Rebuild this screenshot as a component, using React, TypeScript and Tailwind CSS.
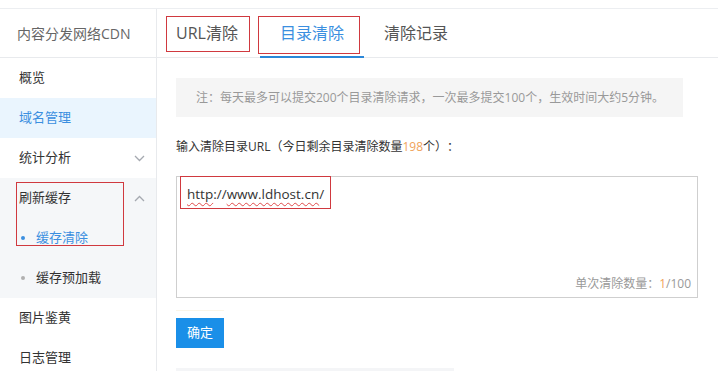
import React from "react";

const font = { fontFamily: '"Open Sans", "Noto Sans CJK SC", sans-serif' };

function Chevron({ up }: { up?: boolean }) {
  return (
    <svg width="11" height="7" viewBox="0 0 11 7" className="mr-[11px]">
      <path
        d={up ? "M1 6 L5.5 1.5 L10 6" : "M1 1 L5.5 5.5 L10 1"}
        fill="none"
        stroke="#a5a9b0"
        strokeWidth="1.3"
      />
    </svg>
  );
}

export default function App() {
  return (
    <div
      className="relative w-[718px] h-[371px] overflow-hidden bg-white text-[#333] [text-spacing-trim:space-all]"
      style={font}
    >
      <div className="h-[8px]" />
      <div className="flex h-[363px] border-t border-[#eceef1]">
        {/* Sidebar */}
        <aside className="w-[157px] shrink-0 border-r border-[#e8eaed] flex flex-col overflow-hidden">
          <div className="h-[49px] shrink-0 border-b border-[#e8eaed] flex items-center pl-[17px] text-[14px] text-[#666]">
            内容分发网络CDN
          </div>
          <div className="h-[40px] shrink-0 flex items-center pl-[19px] text-[13px] text-[#333]">概览</div>
          <div className="h-[40px] shrink-0 flex items-center pl-[19px] text-[13px] text-[#3b8fe0] bg-[#eaf5fe]">
            域名管理
          </div>
          <div className="h-[40px] shrink-0 flex items-center justify-between pl-[19px] text-[13px] text-[#333]">
            <span>统计分析</span>
            <Chevron />
          </div>
          <div className="shrink-0 bg-[#f5f7f9]">
            <div className="h-[40px] flex items-center justify-between pl-[19px] text-[13px] text-[#333]">
              <span>刷新缓存</span>
              <Chevron up />
            </div>
            <div className="h-[40px] flex items-center pl-[21px] text-[13px] text-[#3b8fe0]">
              <span className="w-[4px] h-[4px] rounded-full bg-[#3b8fe0] mr-[11px]" />
              缓存清除
            </div>
            <div className="h-[40px] flex items-center pl-[21px] text-[13px] text-[#333]">
              <span className="w-[4px] h-[4px] rounded-full bg-[#b0b0b0] mr-[11px]" />
              缓存预加载
            </div>
          </div>
          <div className="h-[40px] shrink-0 flex items-center pl-[19px] text-[13px] text-[#333]">图片鉴黄</div>
          <div className="h-[40px] shrink-0 flex items-center pl-[19px] text-[13px] text-[#333]">日志管理</div>
        </aside>

        {/* Main */}
        <main className="flex-1 flex flex-col">
          <div className="h-[49px] shrink-0 border-b border-[#e8eaed] flex text-[16px]">
            <div className="w-[103px] pl-[19px] flex items-center text-[#555]">URL清除</div>
            <div className="w-[104px] flex items-center justify-center text-[#3b8fe0] border-b-2 border-[#2b87d8] mb-[-1px]">
              目录清除
            </div>
            <div className="pl-[20px] flex items-center text-[#555]">清除记录</div>
          </div>

          <div className="pl-[19px] pt-[20px] flex flex-col">
            <div className="w-[507px] h-[39px] bg-[#f5f5f5] flex items-center pl-[20px] text-[12px] text-[#999]">
              注：每天最多可以提交200个目录清除请求，一次最多提交100个，生效时间大约5分钟。
            </div>
            <div className="mt-[21px] h-[18px] flex items-center text-[12px] text-[#333]">
              输入清除目录URL（今日剩余目录清除数量<span className="text-[#f0a35a]">198</span>个）：
            </div>
            <div className="mt-[20px] w-[522px] h-[122px] border border-[#cfcfcf] relative">
              <div className="pl-[10px] pt-[7px] text-[13.5px] text-[#333]">
                <span className="underline decoration-wavy decoration-[#e04a4a] decoration-1 underline-offset-[3px]">http</span>
                ://
                <span className="underline decoration-wavy decoration-[#e04a4a] decoration-1 underline-offset-[3px]">www.ldhost.cn</span>
                /
              </div>
              <div className="absolute right-[6px] bottom-[4px] text-[12px] text-[#999]">
                单次清除数量：<span className="text-[#f0a35a]">1</span>/100
              </div>
            </div>
            <div className="mt-[12px] w-[48px] h-[1px] bg-[#fbf5e8]" />
            <button className="mt-[7px] w-[48px] h-[30px] bg-[#1a8fe8] text-white text-[13px] flex items-center justify-center">
              确定
            </button>
            <div className="mt-[20px] w-[278px] h-[6px] bg-[#f4f5f7]" />
          </div>
        </main>
      </div>

      {/* Red annotation boxes */}
      <div className="absolute left-[166px] top-[16px] w-[84px] h-[36px] border border-[#d0393f]" />
      <div className="absolute left-[258px] top-[16px] w-[102px] h-[38px] border border-[#d0393f]" />
      <div className="absolute left-[16px] top-[182px] w-[108px] h-[64px] border border-[#d0393f]" />
      <div className="absolute left-[180px] top-[176px] w-[151px] h-[33px] border border-[#d0393f]" />
    </div>
  );
}
